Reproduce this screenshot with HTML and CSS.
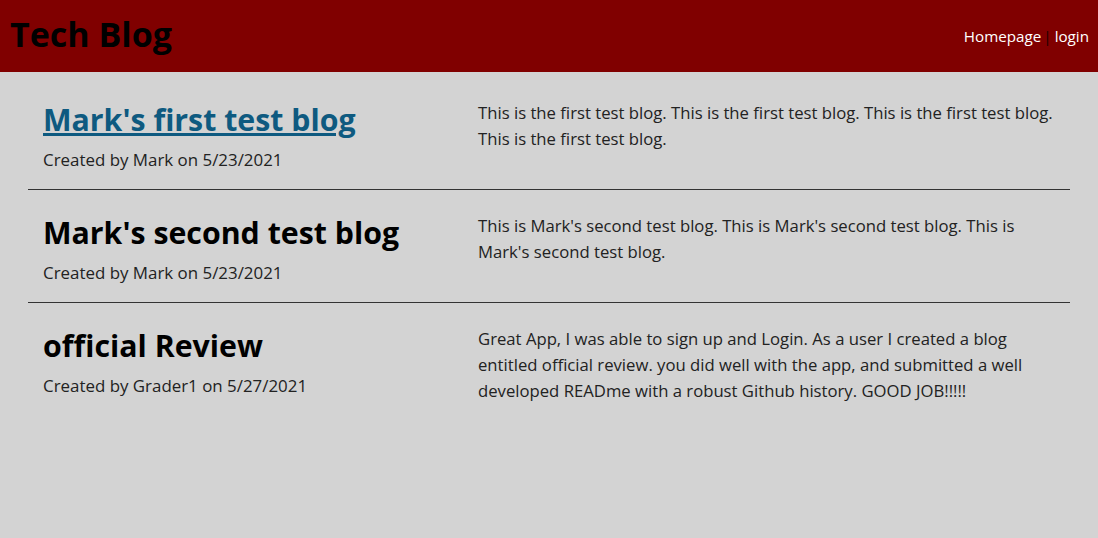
FILE: index.html
```html
<!DOCTYPE html>
<html lang="en">
<head>
<meta charset="utf-8">
<title>Tech Blog</title>
<link rel="stylesheet" href="styles.css">
</head>
<body>
<header class="site-header">
  <h1 class="brand">Tech Blog</h1>
  <nav class="nav">
    <a class="nav-link" href="#">Homepage</a><span class="nav-sep">|</span><a class="nav-link" href="#">login</a>
  </nav>
</header>
<main class="posts">
  <article class="post">
    <div class="post-head">
      <h2 class="post-title"><a class="post-link" href="#">Mark's first test blog</a></h2>
      <p class="post-meta">Created by Mark on 5/23/2021</p>
    </div>
    <p class="post-body">This is the first test blog. This is the first test blog. This is the first test blog. This is the first test blog.</p>
  </article>
  <article class="post">
    <div class="post-head">
      <h2 class="post-title">Mark's second test blog</h2>
      <p class="post-meta">Created by Mark on 5/23/2021</p>
    </div>
    <p class="post-body">This is Mark's second test blog. This is Mark's second test blog. This is Mark's second test blog.</p>
  </article>
  <article class="post post-last">
    <div class="post-head">
      <h2 class="post-title">official Review</h2>
      <p class="post-meta">Created by Grader1 on 5/27/2021</p>
    </div>
    <p class="post-body">Great App, I was able to sign up and Login. As a user I created a blog entitled official review. you did well with the app, and submitted a well developed READme with a robust Github history. GOOD JOB!!!!!</p>
  </article>
</main>
</body>
</html>
```

FILE: styles.css
```css
* { box-sizing: border-box; }
html, body { margin: 0; padding: 0; }
body {
  background: #d3d3d3;
  font-family: "Open Sans", "Noto Sans", sans-serif;
  color: #222;
  height: 538px;
}
.site-header {
  background: #800000;
  height: 72px;
  display: flex;
  align-items: center;
  justify-content: space-between;
  padding: 0 9px 4px 10px;
}
.brand {
  margin: 0;
  font-size: 34px;
  font-weight: 700;
  color: #000;
  line-height: 44px;
}
.nav {
  display: flex;
  align-items: center;
  font-size: 15.2px;
  padding-top: 3px;
}
.nav-link { color: #fff; text-decoration: none; }
.nav-sep { color: #1a0000; margin: 0 3px 0 2px; }
.posts {
  margin: 0 28px;
  padding-top: 5px;
}
.post {
  display: grid;
  grid-template-columns: 435px 577px;
  height: 113px;
  padding: 23px 15px 0;
  border-bottom: 1px solid #333;
}
.post-last { border-bottom: none; }
.post-title {
  margin: 0;
  font-size: 30.3px;
  font-weight: 700;
  color: #000;
  line-height: 40px;
}
.post-link { color: #0e5a80; text-decoration: underline; }
.post-meta {
  margin: 8px 0 0;
  font-size: 16.9px;
  line-height: 24px;
  color: #222;
}
.post-body {
  margin: 0;
  font-size: 16.7px;
  line-height: 26px;
  color: #222;
}
```
